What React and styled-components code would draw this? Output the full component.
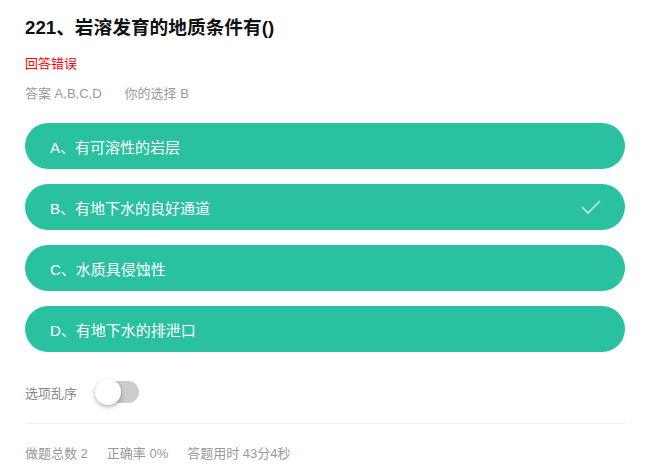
import styled, { createGlobalStyle } from "styled-components";

const GlobalStyle = createGlobalStyle`
    body{
        margin:0;
        background:#fff;
        font-family:"Liberation Sans","Noto Sans CJK SC",sans-serif;
    }
`;

const Page = styled.div`
    padding:0 24px 0 25px;
`;

const Title = styled.h1`
    margin:0;
    padding-top:17px;
    font-size:18.7px;
    line-height:22px;
    font-weight:700;
    color:#111;
`;

const Result = styled.div`
    margin-top:16px;
    font-size:13px;
    line-height:18px;
    color:#f00;
`;

const AnswerLine = styled.div`
    margin-top:12px;
    font-size:13px;
    line-height:18px;
    color:#999;
    display:flex;
    gap:23px;
`;

const Options = styled.div`
    margin-top:20px;
    display:flex;
    flex-direction:column;
    gap:15px;
`;

const Option = styled.div`
    height:46px;
    border-radius:23px;
    background:#29c1a0;
    color:#fff;
    font-size:15px;
    display:flex;
    align-items:center;
    justify-content:space-between;
    padding:0 24px 0 25px;
    box-sizing:border-box;
`;

const Check = styled.svg`
    width:20px;
    height:14px;
`;

// 옵션 순서 섞기 스위치
const ToggleRow = styled.div`
    margin-top:27px;
    display:flex;
    align-items:center;
    gap:20px;
    font-size:13px;
    color:#888;
    height:26px;
`;

const Track = styled.div`
    position:relative;
    width:42px;
    height:22px;
    border-radius:11px;
    background:#ccc;
`;

const Knob = styled.div`
    position:absolute;
    left:-2px;
    top:-2px;
    width:26px;
    height:26px;
    border-radius:50%;
    background:#fff;
    box-shadow:0 2px 4px rgba(0,0,0,0.3);
`;

const Divider = styled.div`
    margin-top:18px;
    height:1px;
    background:#eee;
`;

const Stats = styled.div`
    margin-top:21px;
    display:flex;
    gap:19px;
    font-size:13px;
    line-height:18px;
    color:#999;
`;

const options = [
    { label: "A、有可溶性的岩层" },
    { label: "B、有地下水的良好通道", picked: true },
    { label: "C、水质具侵蚀性" },
    { label: "D、有地下水的排泄口" },
];

const App = () => {
    return (
        <>
            <GlobalStyle />
            <Page>
                <Title>221、岩溶发育的地质条件有()</Title>
                <Result>回答错误</Result>
                <AnswerLine>
                    <span>答案 A,B,C,D</span>
                    <span>你的选择 B</span>
                </AnswerLine>
                <Options>
                    {options.map((o) => (
                        <Option key={o.label}>
                            <span>{o.label}</span>
                            {o.picked && (
                                <Check viewBox="0 0 20 14">
                                    <path d="M1 7 L7 13 L19 1" fill="none" stroke="#e8fff8" strokeWidth="1.3" />
                                </Check>
                            )}
                        </Option>
                    ))}
                </Options>
                <ToggleRow>
                    <span>选项乱序</span>
                    <Track><Knob /></Track>
                </ToggleRow>
                <Divider />
                <Stats>
                    <span>做题总数 2</span>
                    <span>正确率 0%</span>
                    <span>答题用时 43分4秒</span>
                </Stats>
            </Page>
        </>
    )
}

export default App;
